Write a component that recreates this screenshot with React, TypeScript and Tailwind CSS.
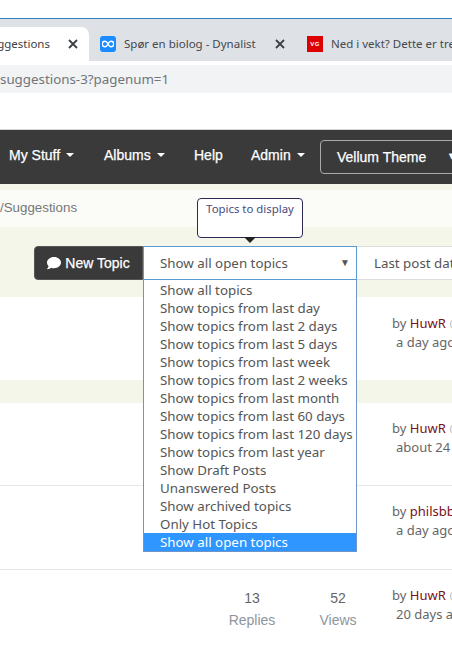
import { FaComment } from 'react-icons/fa';

const options = [
  'Show all topics',
  'Show topics from last day',
  'Show topics from last 2 days',
  'Show topics from last 5 days',
  'Show topics from last week',
  'Show topics from last 2 weeks',
  'Show topics from last month',
  'Show topics from last 60 days',
  'Show topics from last 120 days',
  'Show topics from last year',
  'Show Draft Posts',
  'Unanswered Posts',
  'Show archived topics',
  'Only Hot Topics',
];

function CloseIcon() {
  return (
    <svg width="10" height="10" viewBox="0 0 10 10" className="shrink-0 text-[#3c4043]">
      <path d="M1 1l8 8M9 1l-8 8" stroke="currentColor" strokeWidth="1.8" fill="none" />
    </svg>
  );
}

function Caret() {
  return <span className="ml-[6px] inline-block border-x-[4px] border-t-[4px] border-x-transparent border-t-current align-middle" />;
}

function NavItem({ label, caret, className }: { label: string; caret?: boolean; className: string }) {
  return (
    <span className={`flex shrink-0 items-center whitespace-nowrap ${className}`}>
      {label}
      {caret && <Caret />}
    </span>
  );
}

function TopicRow({ by, when, className, stats }: { by: string; when: string; className: string; stats?: boolean }) {
  return (
    <div className={`flex pl-[209px] ${className}`}>
      <div className="w-[86px] shrink-0 pt-[2px] text-center">
        {stats && (
          <>
            <div className="text-[#666]">13</div>
            <div className="mt-[1px] text-[#8d96a0]">Replies</div>
          </>
        )}
      </div>
      <div className="w-[86px] shrink-0 pt-[2px] text-center">
        {stats && (
          <>
            <div className="text-[#666]">52</div>
            <div className="mt-[1px] text-[#8d96a0]">Views</div>
          </>
        )}
      </div>
      <div className="ml-[11px] shrink-0 whitespace-nowrap font-['Noto_Sans',sans-serif] text-[13px] leading-[19px] text-[#666]">
        <div>
          by <span className="text-[#7a1020]">{by}</span> <span className="text-[#bbb]">@</span>
        </div>
        <div className="ml-[4px]">{when}</div>
      </div>
    </div>
  );
}

export default function App() {
  return (
    <div className="relative h-[645px] w-[452px] overflow-hidden bg-white font-['Liberation_Sans',sans-serif] text-[14px]">
      {/* browser chrome */}
      <div className="box-content h-[18px] border-b border-[#2f7fc1]" />
      <div className="flex h-[42px] items-end bg-[#dee1e6] font-['Noto_Sans',sans-serif] text-[11.5px] text-[#3c4043]">
        <div className="flex h-[34px] w-[89px] shrink-0 items-center justify-end gap-[18px] overflow-hidden rounded-tr-[8px] bg-white pr-[11px] pb-[1px]">
          <span className="whitespace-nowrap">Suggestions</span>
          <CloseIcon />
        </div>
        <div className="flex h-[34px] w-[206px] shrink-0 items-center pl-[11px] pb-[1px]">
          <span className="flex h-[16px] w-[16px] shrink-0 items-center justify-center rounded-[3px] bg-[#1a8cff]">
            <svg width="12" height="8" viewBox="0 0 12 8">
              <path d="M6 4C5 2 4 1.2 3 1.2a2.8 2.8 0 000 5.6C4 6.800 5 6 6 4s2-2.800 3-2.800a2.800 2.800 0 010 5.600C8 6.800 7 6 6 4z" stroke="#fff" strokeWidth="1.500" fill="none" />
            </svg>
          </span>
          <span className="ml-[8px] whitespace-nowrap text-[#45484c]">Spør en biolog - Dynalist</span>
          <span className="ml-[19px]"><CloseIcon /></span>
          <span className="ml-[11px] h-[20px] w-px bg-[#9aa0a6]" />
        </div>
        <div className="flex h-[34px] shrink-0 items-center pl-[12px] pb-[1px]">
          <span className="flex h-[16px] w-[16px] shrink-0 items-center justify-center bg-[#dd0000] font-['Liberation_Sans',sans-serif] text-[6px] font-bold leading-none tracking-[0.5px] text-white">
            VG
          </span>
          <span className="ml-[8px] whitespace-nowrap text-[#45484c]">Ned i vekt? Dette er treningen</span>
        </div>
      </div>
      <div className="pt-[4px]">
        <div className="flex h-[28px] items-center overflow-hidden bg-[#f1f3f4] pt-[1px] font-['Noto_Sans',sans-serif] text-[13.33px] text-[#70757a]">
          <span className="whitespace-nowrap">suggestions-3?pagenum=1</span>
        </div>
      </div>
      <div className="h-[37px] border-b border-[#d4d4d4]" />

      {/* site nav */}
      <nav className="flex h-[54px] items-center bg-[#3a3a3a] text-[14px] text-white [-webkit-text-stroke:0.25px_white]">
        <NavItem label="My Stuff" caret className="mb-[4px] ml-[9px] w-[95px]" />
        <NavItem label="Albums" caret className="mb-[4px] w-[90px]" />
        <NavItem label="Help" className="mb-[4px] w-[57px]" />
        <NavItem label="Admin" caret className="mb-[4px] w-[69px]" />
        <div className="flex h-[34px] w-[160px] shrink-0 items-center rounded-[4px] border border-[#aaa] pl-[16px] text-[14px]">
          <span className="whitespace-nowrap">Vellum Theme</span>
          <span className="ml-[21px] text-[9px]">▼</span>
        </div>
      </nav>

      {/* breadcrumb */}
      <div className="h-[43px] bg-[#f4f6ea] pt-[6px]">
        <div className="h-[37px] bg-[#fbfcf7] pt-[10px] text-[13.33px] leading-[16px] text-[#777]">/Suggestions</div>
      </div>

      {/* toolbar */}
      <div className="flex h-[70px] items-start bg-[#f4f6ea] pt-[19px] pl-[34px]">
        <button className="flex h-[34px] w-[109px] shrink-0 items-center justify-center gap-[4px] rounded-l-[4px] border border-[#555] bg-[#3a3a3a] text-white [-webkit-text-stroke:0.25px_white]">
          <FaComment size={14} />
          New Topic
        </button>
        <div className="flex h-[34px] w-[214px] shrink-0 items-center justify-between border border-[#5b9bd5] bg-white pt-[2px] pr-[6px] pl-[16px] font-['Noto_Sans',sans-serif] text-[13.33px] text-[#555]">
          Show all open topics
          <span className="pb-[3px] text-[10px]">▼</span>
        </div>
        <div className="flex h-[34px] w-[120px] shrink-0 items-center border border-l-0 border-[#ddd] bg-white pt-[2px] pl-[17px] font-['Noto_Sans',sans-serif] text-[13.33px] whitespace-nowrap text-[#555]">
          Last post date
        </div>
      </div>

      {/* topic rows */}
      <TopicRow by="HuwR" when="a day ago" className="h-[83px] bg-white pt-[17px]" />
      <div className="h-[23px] bg-[#f4f6ea]" />
      <TopicRow by="HuwR" when="about 24 hours" className="h-[83px] border-b border-[#e8e8e8] bg-white pt-[16px]" />
      <TopicRow by="philsbb" when="a day ago" className="h-[84px] border-b border-[#e8e8e8] bg-white pt-[16px]" />
      <TopicRow by="HuwR" when="20 days ago" stats className="bg-white pt-[16px]" />

      {/* tooltip over the select */}
      <div className="absolute top-[198px] left-[197px] h-[40px] w-[106px] rounded-[4px] border border-[#2a2a55] bg-white pt-[3px] text-center font-['Noto_Sans',sans-serif] text-[11.4px] leading-[14px] text-[#4a4a80]">
        Topics to display
        <span className="absolute top-[38px] left-[46px] border-x-[6px] border-t-[6px] border-x-transparent border-t-[#222]" />
      </div>

      {/* open dropdown list */}
      <ul className="absolute top-[280px] left-[143px] w-[214px] border border-t-0 border-[#6f95c8] bg-white pt-[1px] font-['Noto_Sans',sans-serif] text-[13.33px] leading-[18px] text-[#555]">
        {options.map((o) => (
          <li key={o} className="h-[18px] pl-[16px] whitespace-nowrap">
            {o}
          </li>
        ))}
        <li className="h-[18px] bg-[#2f95ff] pl-[16px] text-white">Show all open topics</li>
      </ul>
    </div>
  );
}
